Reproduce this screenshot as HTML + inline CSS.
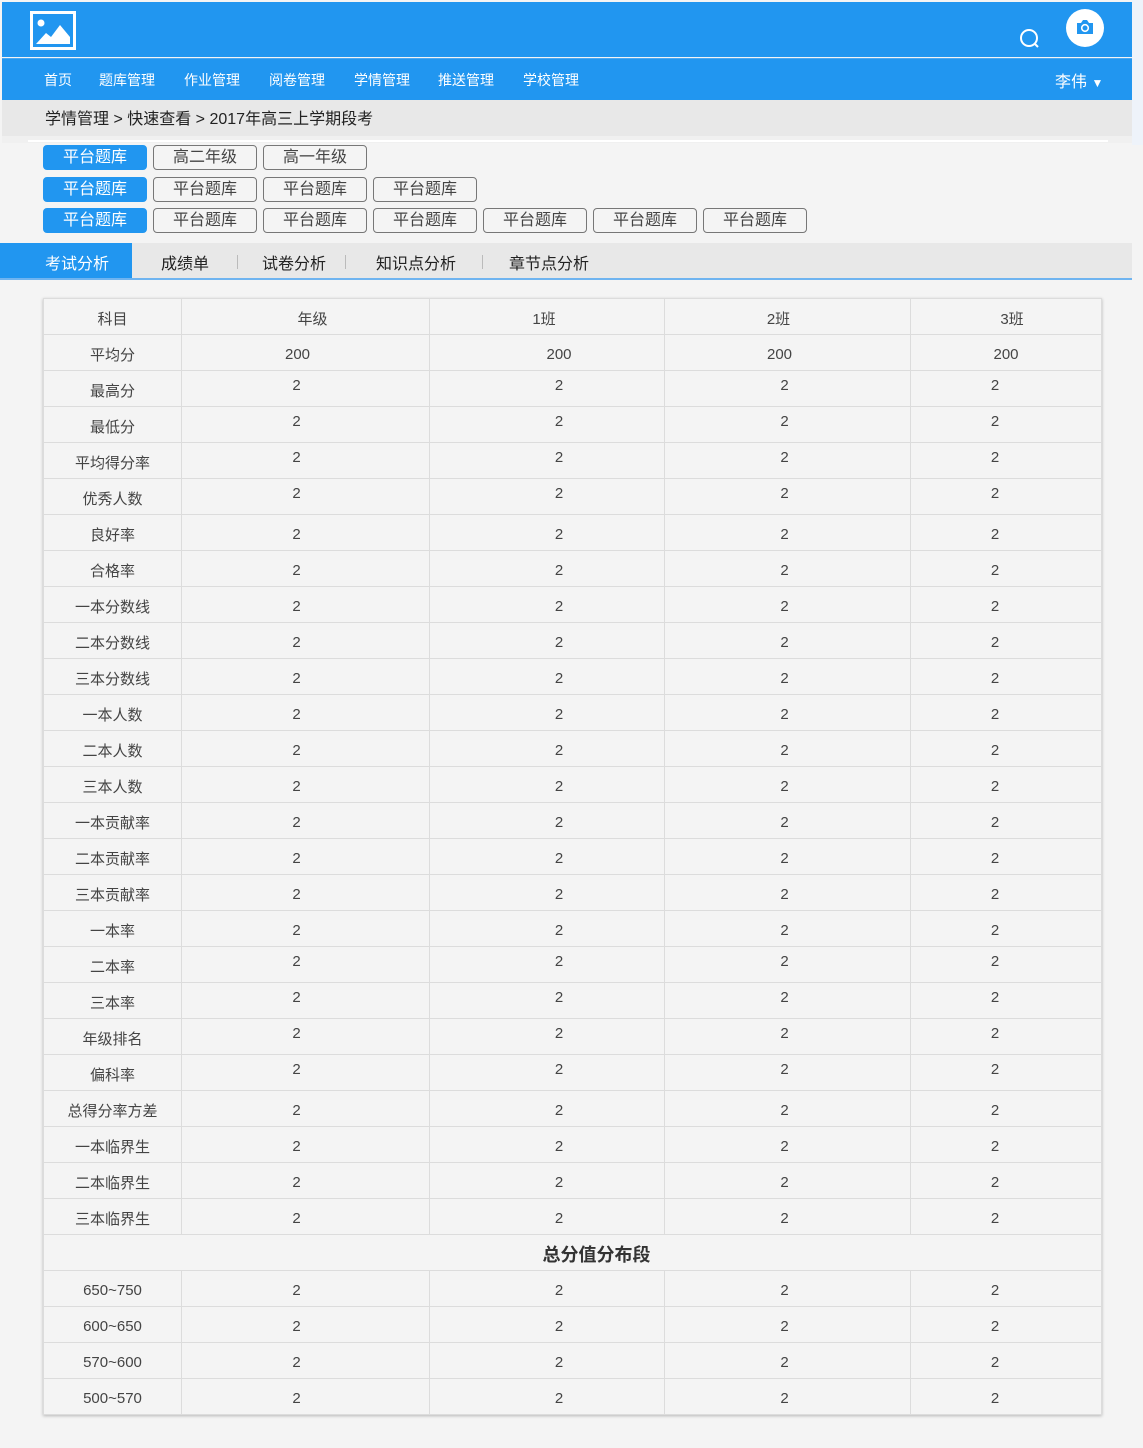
<!DOCTYPE html>
<html><head><meta charset="utf-8"><style>
*{margin:0;padding:0;box-sizing:border-box}
body{width:1143px;height:1448px;background:#f4f4f4;font-family:"Liberation Sans","Noto Sans CJK SC",sans-serif;position:relative;overflow:hidden;color:#333}
.abs{position:absolute}
#top{left:2px;top:2px;width:1130px;height:55px;background:#2196f0}
#nav{left:2px;top:58px;width:1130px;height:42px;background:#2196f0;border-top:1px solid #4aa8f2}
#nav span{position:absolute;top:11px;color:#fff;font-size:14px}
#crumb{left:2px;top:100px;width:1130px;height:36px;background:#e8e8e8;font-size:16px;line-height:40px;padding-left:43px;color:#222}
#rstrip{left:1132px;top:0;width:11px;height:145px;background:#eef3fa}
.btn{position:absolute;width:104px;height:25px;border:1px solid #777;border-radius:4px;font-size:16px;text-align:center;line-height:24px;color:#444;background:#f4f4f4}
.btn.on{background:#2196f0;border-color:#2196f0;color:#fff}
#tabs{left:0;top:243px;width:1132px;height:37px;background:#e8e8e8;border-bottom:2px solid #6fb4f0}
#tabs span{position:absolute;top:7px;font-size:16px;color:#222}
#tabs i{position:absolute;top:12px;width:1px;height:14px;background:#bbb}
table{position:absolute;left:43px;top:298px;width:1058px;border-collapse:collapse;table-layout:fixed;background:#f4f4f4;box-shadow:0 1px 3px rgba(0,0,0,.25)}
td{height:36px;border:1px solid #dcdcdc;text-align:center;font-size:15px;color:#444;padding-top:3px}
td:nth-child(2){padding-right:18px}
td:nth-child(3){padding-left:24px}
td:nth-child(4){padding-right:6px}
td:nth-child(5){padding-right:22px}
tr.hd td:nth-child(2){padding:3px 0 0 14px}
tr.hd td:nth-child(3){padding:3px 6px 0 0}
tr.hd td:nth-child(4){padding:3px 18px 0 0}
tr.hd td:nth-child(5){padding:3px 0 0 12px}
tr.av td:nth-child(2){padding:3px 16px 0 0}
tr.av td:nth-child(3){padding:3px 0 0 24px}
tr.av td:nth-child(4){padding:3px 16px 0 0}
tr.av td:nth-child(5){padding:3px 0 0 0}
td.u{vertical-align:top;padding-top:6px}
td.h{font-size:18px;font-weight:bold;color:#333;padding-left:48px !important}
</style></head><body>
<div id="top" class="abs">
 <svg class="abs" style="left:28px;top:9px" width="46" height="39" viewBox="0 0 46 39"><rect x="1.5" y="1.5" width="43" height="36" fill="#2196f0" stroke="#fff" stroke-width="3"/><circle cx="11" cy="12" r="3.5" fill="#fff"/><path d="M6 33 L16 22 L21 26 L30 14 L40 26 L40 33Z" fill="#fff"/></svg>
 <svg class="abs" style="left:1016px;top:25px" width="24" height="24" viewBox="0 0 24 24"><circle cx="11" cy="11" r="8" fill="none" stroke="#fff" stroke-width="2"/><path d="M17 17l3 3" stroke="#fff" stroke-width="2"/></svg>
 <div class="abs" style="left:1064px;top:7px;width:38px;height:38px;border-radius:50%;background:#fff"></div>
 <svg class="abs" style="left:1074px;top:17px" width="18" height="16" viewBox="0 0 18 16"><path d="M1 4h4l2-3h4l2 3h4v11H1z" fill="#2196f0"/><circle cx="9" cy="9" r="3.3" fill="none" stroke="#fff" stroke-width="1.6"/></svg>
</div>
<div id="nav" class="abs">
 <span style="left:42px">首页</span><span style="left:97px">题库管理</span><span style="left:182px">作业管理</span><span style="left:267px">阅卷管理</span><span style="left:352px">学情管理</span><span style="left:436px">推送管理</span><span style="left:521px">学校管理</span>
 <span style="left:1053px;font-size:16px;top:9px">李伟 <small style="font-size:12px">▼</small></span>
</div>
<div id="crumb" class="abs">学情管理 &gt; 快速查看 &gt; 2017年高三上学期段考</div>
<div id="rstrip" class="abs"></div>
<div class="abs" style="left:2px;top:136px;width:1130px;height:7px;background:#f0f0f0"></div>
<div class="abs" style="left:28px;top:140px;width:1080px;height:2px;background:#fff"></div>

<div class="btn on" style="left:43px;top:145px">平台题库</div><div class="btn" style="left:153px;top:145px">高二年级</div><div class="btn" style="left:263px;top:145px">高一年级</div>
<div class="btn on" style="left:43px;top:177px">平台题库</div><div class="btn" style="left:153px;top:177px">平台题库</div><div class="btn" style="left:263px;top:177px">平台题库</div><div class="btn" style="left:373px;top:177px">平台题库</div>
<div class="btn on" style="left:43px;top:208px">平台题库</div><div class="btn" style="left:153px;top:208px">平台题库</div><div class="btn" style="left:263px;top:208px">平台题库</div><div class="btn" style="left:373px;top:208px">平台题库</div><div class="btn" style="left:483px;top:208px">平台题库</div><div class="btn" style="left:593px;top:208px">平台题库</div><div class="btn" style="left:703px;top:208px">平台题库</div>

<div id="tabs" class="abs">
 <div class="abs" style="left:0;top:0;width:132px;height:35px;background:#2196f0"></div>
 <span style="left:45px;color:#fff">考试分析</span><span style="left:161px">成绩单</span><i style="left:237px"></i><span style="left:262px">试卷分析</span><i style="left:345px"></i><span style="left:376px">知识点分析</span><i style="left:482px"></i><span style="left:509px">章节点分析</span>
</div>

<table>
<colgroup><col style="width:138px"><col style="width:248px"><col style="width:235px"><col style="width:246px"><col style="width:191px"></colgroup>
<tr class="hd"><td>科目</td><td>年级</td><td>1班</td><td>2班</td><td>3班</td></tr>
<tr class="av"><td>平均分</td><td>200</td><td>200</td><td>200</td><td>200</td></tr>
<tr><td>最高分</td><td class="u">2</td><td class="u">2</td><td class="u">2</td><td class="u">2</td></tr>
<tr><td>最低分</td><td class="u">2</td><td class="u">2</td><td class="u">2</td><td class="u">2</td></tr>
<tr><td>平均得分率</td><td class="u">2</td><td class="u">2</td><td class="u">2</td><td class="u">2</td></tr>
<tr><td>优秀人数</td><td class="u">2</td><td class="u">2</td><td class="u">2</td><td class="u">2</td></tr>
<tr><td>良好率</td><td>2</td><td>2</td><td>2</td><td>2</td></tr>
<tr><td>合格率</td><td>2</td><td>2</td><td>2</td><td>2</td></tr>
<tr><td>一本分数线</td><td>2</td><td>2</td><td>2</td><td>2</td></tr>
<tr><td>二本分数线</td><td>2</td><td>2</td><td>2</td><td>2</td></tr>
<tr><td>三本分数线</td><td>2</td><td>2</td><td>2</td><td>2</td></tr>
<tr><td>一本人数</td><td>2</td><td>2</td><td>2</td><td>2</td></tr>
<tr><td>二本人数</td><td>2</td><td>2</td><td>2</td><td>2</td></tr>
<tr><td>三本人数</td><td>2</td><td>2</td><td>2</td><td>2</td></tr>
<tr><td>一本贡献率</td><td>2</td><td>2</td><td>2</td><td>2</td></tr>
<tr><td>二本贡献率</td><td>2</td><td>2</td><td>2</td><td>2</td></tr>
<tr><td>三本贡献率</td><td>2</td><td>2</td><td>2</td><td>2</td></tr>
<tr><td>一本率</td><td>2</td><td>2</td><td>2</td><td>2</td></tr>
<tr><td>二本率</td><td class="u">2</td><td class="u">2</td><td class="u">2</td><td class="u">2</td></tr>
<tr><td>三本率</td><td class="u">2</td><td class="u">2</td><td class="u">2</td><td class="u">2</td></tr>
<tr><td>年级排名</td><td class="u">2</td><td class="u">2</td><td class="u">2</td><td class="u">2</td></tr>
<tr><td>偏科率</td><td class="u">2</td><td class="u">2</td><td class="u">2</td><td class="u">2</td></tr>
<tr><td>总得分率方差</td><td>2</td><td>2</td><td>2</td><td>2</td></tr>
<tr><td>一本临界生</td><td>2</td><td>2</td><td>2</td><td>2</td></tr>
<tr><td>二本临界生</td><td>2</td><td>2</td><td>2</td><td>2</td></tr>
<tr><td>三本临界生</td><td>2</td><td>2</td><td>2</td><td>2</td></tr>
<tr><td colspan="5" class="h">总分值分布段</td></tr>
<tr><td>650~750</td><td>2</td><td>2</td><td>2</td><td>2</td></tr>
<tr><td>600~650</td><td>2</td><td>2</td><td>2</td><td>2</td></tr>
<tr><td>570~600</td><td>2</td><td>2</td><td>2</td><td>2</td></tr>
<tr><td>500~570</td><td>2</td><td>2</td><td>2</td><td>2</td></tr>
</table>
</body></html>
